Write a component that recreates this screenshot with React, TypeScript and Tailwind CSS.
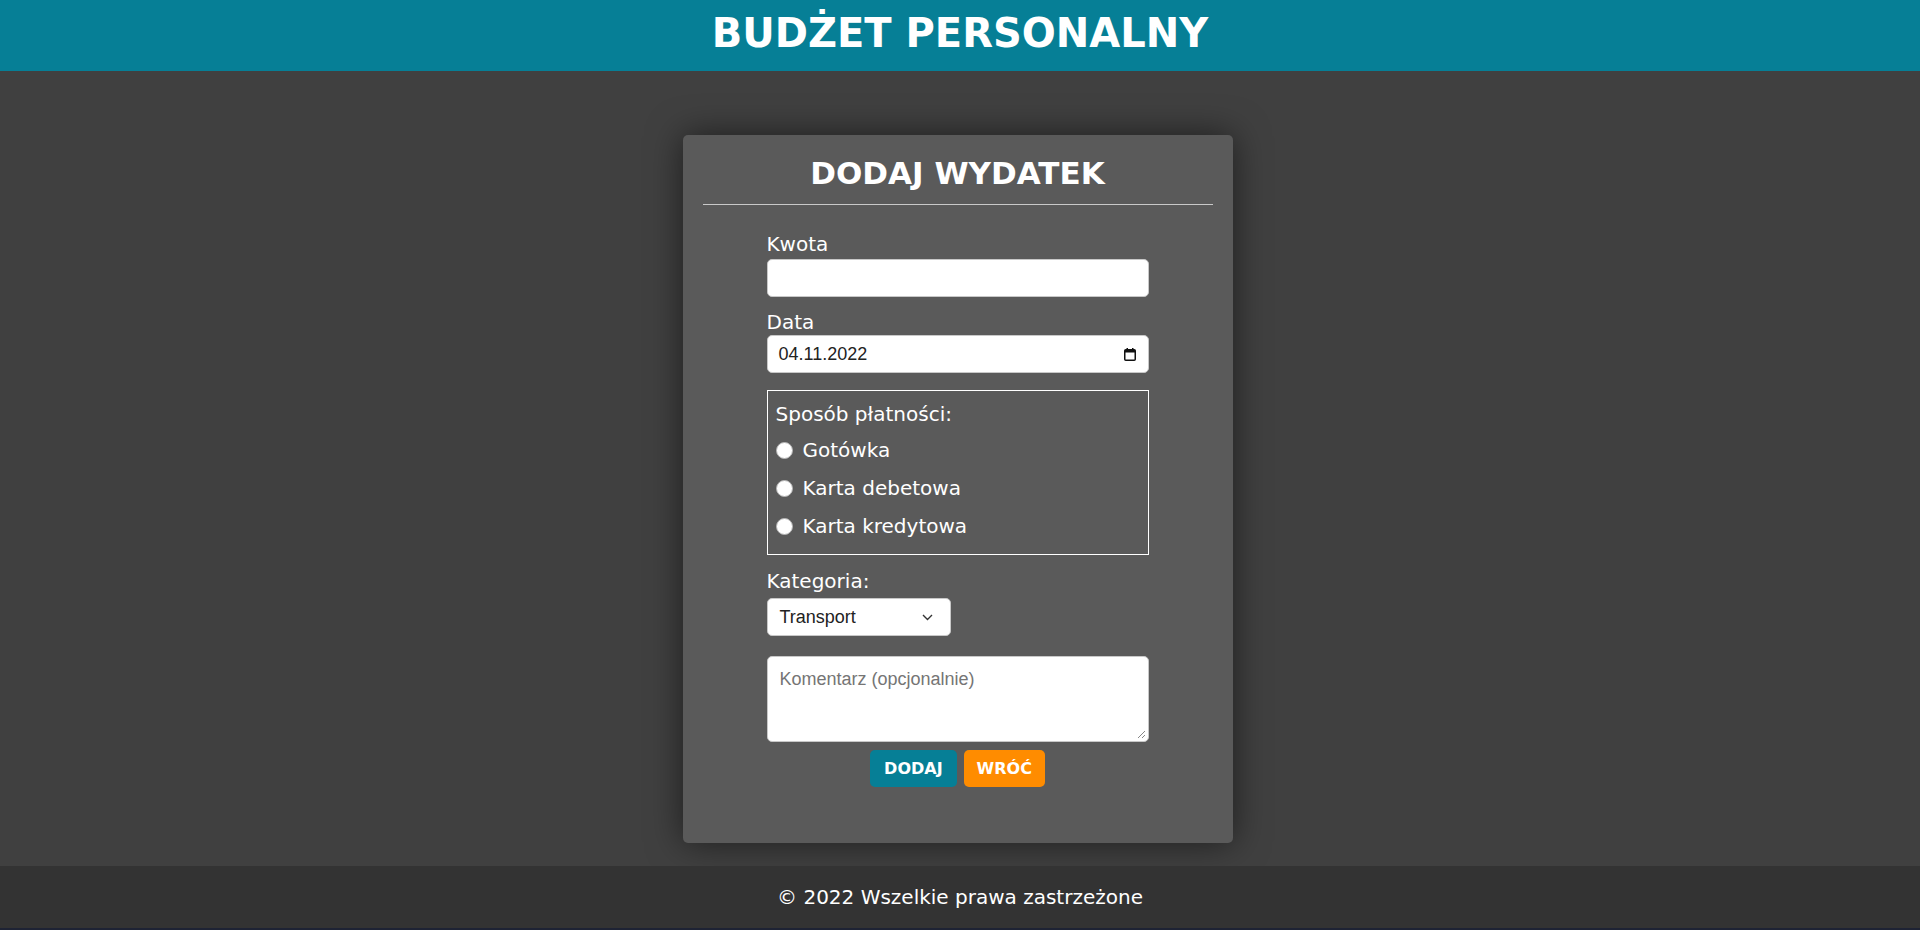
import React from "react";

const font = { fontFamily: '"DejaVu Sans", Verdana, sans-serif' };

function Radio({ label }: { label: string }) {
  return (
    <div className="flex items-center h-[38px]">
      <span className="w-[17px] h-[17px] rounded-full bg-white border border-[#b5b5b5] shrink-0" />
      <span className="ml-[10px] text-[20px] leading-[24px] text-white">{label}</span>
    </div>
  );
}

export default function App() {
  return (
    <div className="min-h-screen h-[930px] flex flex-col bg-[#404040]" style={font}>
      <header className="h-[71px] bg-[#067f96] flex justify-center pt-[9px] shrink-0">
        <h1 className="text-[40px] leading-[48px] font-bold text-white">BUDŻET PERSONALNY</h1>
      </header>
      <main className="flex-1 pt-[64px] pr-[5px]">
        <div className="w-[550px] h-[708px] mx-auto bg-[#5a5a5a] rounded-[5px] shadow-[0_0_35px_rgba(0,0,0,0.55)] px-[20px] pt-[20px]">
          <h2 className="text-[31px] leading-[36px] font-bold text-white text-center">DODAJ WYDATEK</h2>
          <div className="mt-[13px] h-px bg-[#c9c9c9]" />
          <div className="w-[382px] mx-auto pt-[27px]">
            <label className="block text-[20px] leading-[24px] text-white mb-[3px]">Kwota</label>
            <div className="h-[38px] rounded-[5px] border border-[#c8c8c8] bg-white" />

            <label className="block mt-[13px] text-[20px] leading-[24px] text-white mb-[1px]">Data</label>
            <div
              className="h-[38px] rounded-[5px] border border-[#c8c8c8] bg-white flex items-center pl-[11px] pr-[12px] text-[18px] text-[#222]"
              style={{ fontFamily: '"Liberation Sans", Arial, sans-serif' }}
            >
              <span className="flex-1">04.11.2022</span>
              <svg width="12" height="13" viewBox="0 0 12 13" className="shrink-0">
                <rect x="0.75" y="1.75" width="10.5" height="10.5" rx="1" fill="none" stroke="#111" strokeWidth="1.5" />
                <rect x="1" y="2" width="10" height="2.5" fill="#111" />
                <rect x="2.5" y="0" width="1.5" height="2.5" fill="#111" />
                <rect x="8" y="0" width="1.5" height="2.5" fill="#111" />
              </svg>
            </div>

            <div className="mt-[17px] h-[165px] border border-white pt-[11px] pl-[8px]">
              <div className="text-[20px] leading-[24px] text-white">Sposób płatności:</div>
              <div className="mt-[5px]">
                <Radio label="Gotówka" />
                <Radio label="Karta debetowa" />
                <Radio label="Karta kredytowa" />
              </div>
            </div>

            <label className="block mt-[14px] text-[20px] leading-[24px] text-white mb-[5px]">Kategoria:</label>
            <div
              className="w-[184px] h-[38px] rounded-[5px] border border-[#c8c8c8] bg-white flex items-center pl-[12px] pr-[17px] text-[18px] text-[#222]"
              style={{ fontFamily: '"Liberation Sans", Arial, sans-serif' }}
            >
              <span className="flex-1">Transport</span>
              <svg width="11" height="7" viewBox="0 0 11 7" className="shrink-0">
                <path d="M1 1l4.5 4.5L10 1" fill="none" stroke="#333" strokeWidth="1.4" />
              </svg>
            </div>

            <div
              className="relative mt-[20px] h-[86px] rounded-[5px] border border-[#c8c8c8] bg-white pt-[9px] pl-[12px] text-[18px] text-[#757575]"
              style={{ fontFamily: '"Liberation Sans", Arial, sans-serif' }}
            >
              Komentarz (opcjonalnie)
              <svg width="9" height="9" viewBox="0 0 9 9" className="absolute right-[2px] bottom-[2px]">
                <path d="M8 1L1 8M8 5L5 8" stroke="#888" strokeWidth="1" />
              </svg>
            </div>
          </div>
          <div className="mt-[8px] flex justify-center gap-[7px]">
            <button className="h-[37px] px-[14px] rounded-[5px] bg-[#067f96] text-white text-[16px] font-bold">DODAJ</button>
            <button className="h-[37px] px-[13px] rounded-[5px] bg-[#ff8c00] text-white text-[16px] font-bold">WRÓĆ</button>
          </div>
        </div>
      </main>
      <footer className="h-[62px] bg-[#333333] flex items-center justify-center text-white text-[20px] shrink-0">
        © 2022 Wszelkie prawa zastrzeżone
      </footer>
      <div className="h-[2px] bg-[#1e2334] shrink-0" />
    </div>
  );
}
